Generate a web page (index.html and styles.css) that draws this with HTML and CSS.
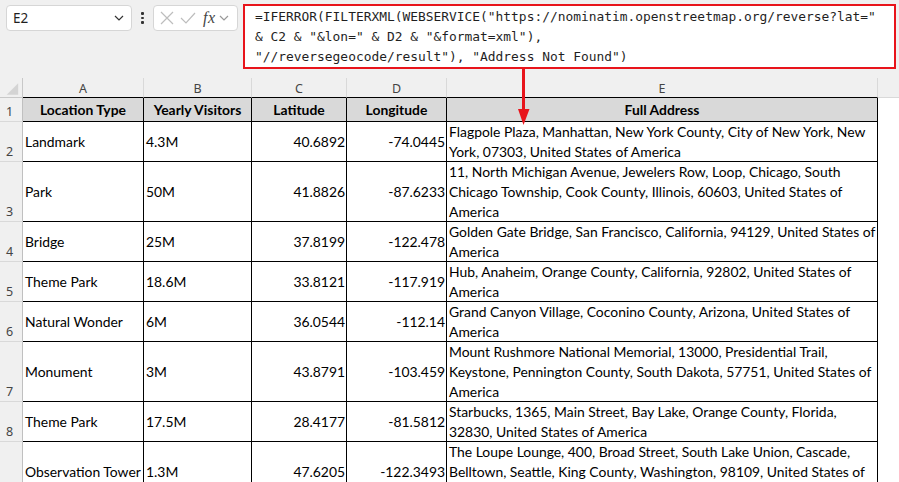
FILE: index.html
```html
<!DOCTYPE html>
<html>
<head>
<meta charset="utf-8">
<link rel="stylesheet" href="styles.css">
</head>
<body>
<div class="page">
  <div class="topbar">
    <div class="namebox">
      <span class="nb-text">E2</span>
      <svg class="chev" width="10" height="6" viewBox="0 0 10 6"><path d="M1 1 L5 5 L9 1" fill="none" stroke="#333" stroke-width="1.2"/></svg>
    </div>
    <div class="dots"><span></span><span></span><span></span></div>
    <div class="fxbox">
      <svg width="14" height="14" viewBox="0 0 14 14"><path d="M1 1 L13 13 M13 1 L1 13" stroke="#bdbdbd" stroke-width="1.2" fill="none"/></svg>
      <svg width="16" height="14" viewBox="0 0 16 14"><path d="M1 7 L6 12 L15 2" stroke="#bdbdbd" stroke-width="1.2" fill="none"/></svg>
      <span class="fx">fx</span>
      <svg class="chev2" width="10" height="6" viewBox="0 0 10 6"><path d="M1 1 L5 5 L9 1" fill="none" stroke="#9a9a9a" stroke-width="1.2"/></svg>
    </div>
    <div class="formula">
      <div>=IFERROR(FILTERXML(WEBSERVICE("https://nominatim.openstreetmap.org/reverse?lat="</div>
      <div>&amp; C2 &amp; "&amp;lon=" &amp; D2 &amp; "&amp;format=xml"),</div>
      <div>"//reversegeocode/result"), "Address Not Found")</div>
    </div>
  </div>

  <div class="sheet">
    <div class="ch corner"><svg width="23" height="19" viewBox="0 0 23 19"><polygon points="19,5 19,17 7,17" fill="#d4d4d4"/></svg></div>
    <div class="ch">A</div>
    <div class="ch">B</div>
    <div class="ch">C</div>
    <div class="ch">D</div>
    <div class="ch">E</div>
    <div class="ch chf"></div>

    <div class="rh">1</div>
    <div class="c hd">Location Type</div>
    <div class="c hd">Yearly Visitors</div>
    <div class="c hd">Latitude</div>
    <div class="c hd">Longitude</div>
    <div class="c hd">Full Address</div>
    <div class="f"></div>

    <div class="rh">2</div>
    <div class="c">Landmark</div>
    <div class="c">4.3M</div>
    <div class="c num">40.6892</div>
    <div class="c num">-74.0445</div>
    <div class="c addr"><span>Flagpole Plaza, Manhattan, New York County, City of New York, New</span><span>York, 07303, United States of America</span></div>
    <div class="f"></div>

    <div class="rh">3</div>
    <div class="c">Park</div>
    <div class="c">50M</div>
    <div class="c num">41.8826</div>
    <div class="c num">-87.6233</div>
    <div class="c addr"><span>11, North Michigan Avenue, Jewelers Row, Loop, Chicago, South</span><span>Chicago Township, Cook County, Illinois, 60603, United States of</span><span>America</span></div>
    <div class="f"></div>

    <div class="rh">4</div>
    <div class="c">Bridge</div>
    <div class="c">25M</div>
    <div class="c num">37.8199</div>
    <div class="c num">-122.478</div>
    <div class="c addr"><span>Golden Gate Bridge, San Francisco, California, 94129, United States of</span><span>America</span></div>
    <div class="f"></div>

    <div class="rh">5</div>
    <div class="c">Theme Park</div>
    <div class="c">18.6M</div>
    <div class="c num">33.8121</div>
    <div class="c num">-117.919</div>
    <div class="c addr"><span>Hub, Anaheim, Orange County, California, 92802, United States of</span><span>America</span></div>
    <div class="f"></div>

    <div class="rh">6</div>
    <div class="c">Natural Wonder</div>
    <div class="c">6M</div>
    <div class="c num">36.0544</div>
    <div class="c num">-112.14</div>
    <div class="c addr"><span>Grand Canyon Village, Coconino County, Arizona, United States of</span><span>America</span></div>
    <div class="f"></div>

    <div class="rh">7</div>
    <div class="c">Monument</div>
    <div class="c">3M</div>
    <div class="c num">43.8791</div>
    <div class="c num">-103.459</div>
    <div class="c addr"><span>Mount Rushmore National Memorial, 13000, Presidential Trail,</span><span>Keystone, Pennington County, South Dakota, 57751, United States of</span><span>America</span></div>
    <div class="f"></div>

    <div class="rh">8</div>
    <div class="c">Theme Park</div>
    <div class="c">17.5M</div>
    <div class="c num">28.4177</div>
    <div class="c num">-81.5812</div>
    <div class="c addr"><span>Starbucks, 1365, Main Street, Bay Lake, Orange County, Florida,</span><span>32830, United States of America</span></div>
    <div class="f"></div>

    <div class="rh"></div>
    <div class="c">Observation Tower</div>
    <div class="c">1.3M</div>
    <div class="c num">47.6205</div>
    <div class="c num">-122.3493</div>
    <div class="c addr top"><span>The Loupe Lounge, 400, Broad Street, South Lake Union, Cascade,</span><span>Belltown, Seattle, King County, Washington, 98109, United States of</span></div>
    <div class="f"></div>
  </div>

  <svg class="arrow" width="16" height="58" viewBox="0 0 16 58">
    <rect x="6" y="0" width="3" height="44" fill="#e8141b"/>
    <polygon points="2,40 13.5,40 7.5,56" fill="#e8141b"/>
  </svg>
</div>
</body>
</html>
```

FILE: styles.css
```css
html, body {
  margin: 0;
  padding: 0;
  background: #ffffff;
}
.page {
  position: relative;
  width: 899px;
  height: 482px;
  overflow: hidden;
  background: #f0f0f0;
}
.topbar {
  display: flex;
  align-items: flex-start;
  height: 78px;
  padding: 5px 0 0 6px;
  box-sizing: border-box;
}
.namebox {
  width: 126px;
  height: 26px;
  box-sizing: border-box;
  background: #fff;
  border: 1px solid #d6d6d6;
  border-radius: 4px;
  display: flex;
  align-items: center;
  justify-content: space-between;
  padding: 0 7px 0 6px;
  font-family: "Noto Sans", sans-serif;
  font-size: 13.5px;
  color: #1f1f1f;
}
.dots {
  width: 21px;
  height: 26px;
  display: flex;
  flex-direction: column;
  align-items: center;
  justify-content: center;
  gap: 2px;
}
.dots span {
  width: 2.5px;
  height: 2.5px;
  background: #333;
  border-radius: 1px;
}
.fxbox {
  width: 85px;
  height: 26px;
  box-sizing: border-box;
  background: #fff;
  border: 1px solid #d6d6d6;
  border-radius: 4px;
  display: flex;
  align-items: center;
  padding: 0 4px 0 6px;
  gap: 6px;
}
.fx {
  font-family: "Liberation Serif", serif;
  font-style: italic;
  font-size: 16px;
  color: #444;
  margin-left: 1px;
  letter-spacing: 0.5px;
}
.chev2 {
  margin-left: -3px;
}
.formula {
  margin-left: 5px;
  margin-top: -1px;
  width: 653px;
  height: 65px;
  box-sizing: border-box;
  background: #fff;
  border: 2px solid #e8141b;
  padding: 1px 0 0 10px;
  font-family: "DejaVu Sans Mono", monospace;
  font-size: 12.9px;
  line-height: 20px;
  color: #1f1f1f;
  white-space: nowrap;
}
.sheet {
  display: grid;
  grid-template-columns: 23px 121px 108px 95px 100px 431px 21px;
  grid-template-rows: 20px 24px 40px 60px 40px 40px 40px 60px 40px 60px;
  background: #fff;
}
.ch {
  background: #f0f0f0;
  border-right: 1px solid #d9d9d9;
  border-bottom: 1px solid #000;
  box-sizing: border-box;
  font-family: "Noto Sans", sans-serif;
  font-size: 12.5px;
  color: #444;
  display: flex;
  align-items: center;
  justify-content: center;
  padding-top: 1px;
}
.ch.corner {
  border-bottom: 1px solid #c8c8c8;
  border-right: 1px solid #c8c8c8;
  padding: 0;
  align-items: flex-start;
  justify-content: flex-start;
}
.ch.chf {
  border-right: none;
  border-bottom: 1px solid #d9d9d9;
}
.rh {
  background: #f0f0f0;
  border-right: 1px solid #c0c0c0;
  border-bottom: 1px solid #d9d9d9;
  box-sizing: border-box;
  font-family: "Noto Sans", sans-serif;
  font-size: 12.5px;
  color: #444;
  display: flex;
  align-items: flex-end;
  padding: 0 0 1px 6px;
}
.c {
  border-right: 1px solid #000;
  border-bottom: 1px solid #000;
  box-sizing: border-box;
  font-family: Lato, sans-serif;
  font-size: 13.9px;
  line-height: 20px;
  color: #000;
  display: flex;
  flex-direction: column;
  justify-content: center;
  padding: 0 2px 0 2px;
  white-space: nowrap;
  overflow: hidden;
}
.c.hd {
  background: #d9d9d9;
  font-weight: bold;
  align-items: center;
}
.c.num {
  align-items: flex-end;
  padding-right: 1px;
}
.c.addr span {
  display: block;
}
.c.addr.top {
  justify-content: flex-start;
}
.f {
  background: #fff;
}
.arrow {
  position: absolute;
  left: 516px;
  top: 69px;
}
```
